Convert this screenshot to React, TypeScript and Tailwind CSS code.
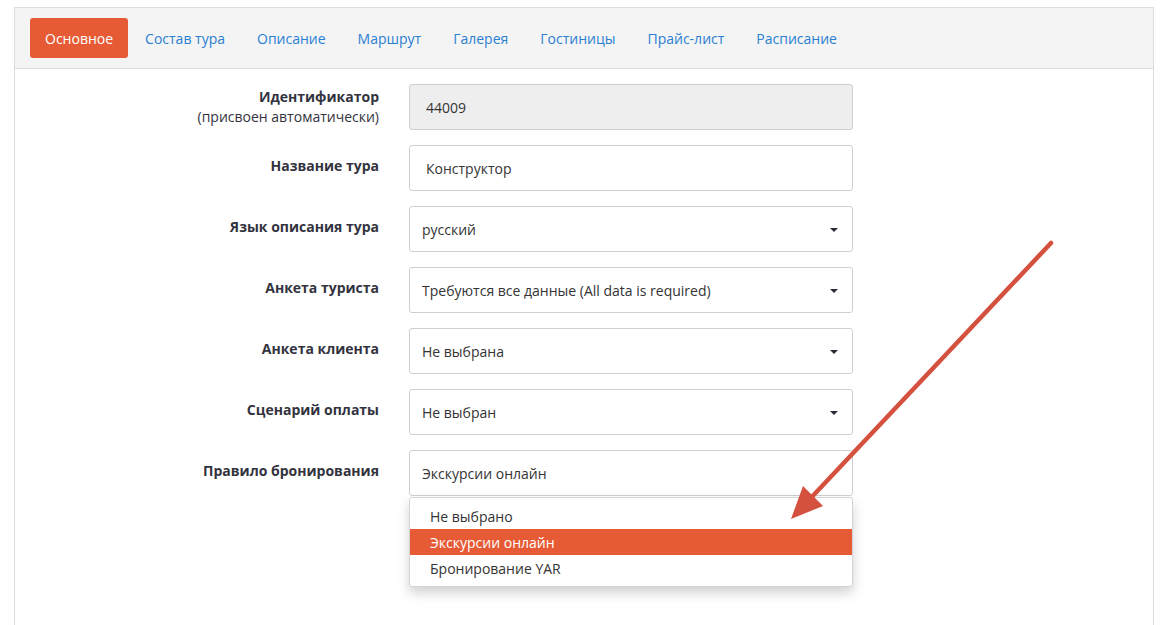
import React from "react";

const tabs = ["Состав тура", "Описание", "Маршрут", "Галерея", "Гостиницы", "Прайс-лист", "Расписание"];

function Caret() {
  return (
    <svg width="8" height="4" viewBox="0 0 8 4" className="absolute right-[14px] top-[21px]">
      <polygon points="0,0 8,0 4,4" fill="#2b2b36" />
    </svg>
  );
}

function Row({ label, sub, children }: { label: string; sub?: string; children: React.ReactNode }) {
  return (
    <div className="flex mb-[15px]">
      <div className={`w-[364px] text-right text-[#333340] ${sub ? "pt-[3px]" : "pt-[11px]"}`}>
        <div className="font-bold text-[14px] leading-[20px]">{label}</div>
        {sub && <div className="text-[14px] leading-[20px]">{sub}</div>}
      </div>
      <div className="ml-[30px] w-[444px] relative">{children}</div>
    </div>
  );
}

function SelectBox({ value, caret = true }: { value: string; caret?: boolean }) {
  return (
    <div className="relative h-[46px] border border-[#cfcfcf] rounded-[3px] bg-white flex items-center pl-[12px] text-[14px] text-[#333]">
      {value}
      {caret && <Caret />}
    </div>
  );
}

export default function App() {
  return (
    <div className="relative w-[1167px] h-[625px] overflow-hidden bg-white" style={{ fontFamily: "'Open Sans', 'Noto Sans', sans-serif" }}>
      <div className="ml-[14px] mr-[13px] mt-[7px] border-x border-t border-[#dddddd] h-[640px]">
        <div className="bg-[#f4f4f4] border-b border-[#dddddd] h-[61px] pt-[10px] pl-[15px] flex items-start">
          <div className="h-[40px] px-[15px] flex items-center rounded-[3px] bg-[#e65b35] text-white text-[14px]">Основное</div>
          {tabs.map((t) => (
            <div key={t} className="h-[40px] ml-[2px] px-[15px] flex items-center text-[14px] text-[#2a7fd2]">
              {t}
            </div>
          ))}
        </div>
        <div className="pt-[15px]">
          <Row label="Идентификатор" sub="(присвоен автоматически)">
            <div className="h-[46px] border border-[#cfcfcf] rounded-[3px] bg-[#eeeeee] flex items-center pl-[16px] text-[14px] text-[#333]">44009</div>
          </Row>
          <Row label="Название тура">
            <div className="h-[46px] border border-[#cfcfcf] rounded-[3px] bg-white flex items-center pl-[16px] text-[14px] text-[#333]">Конструктор</div>
          </Row>
          <Row label="Язык описания тура">
            <SelectBox value="русский" />
          </Row>
          <Row label="Анкета туриста">
            <SelectBox value="Требуются все данные (All data is required)" />
          </Row>
          <Row label="Анкета клиента">
            <SelectBox value="Не выбрана" />
          </Row>
          <Row label="Сценарий оплаты">
            <SelectBox value="Не выбран" />
          </Row>
          <Row label="Правило бронирования">
            <SelectBox value="Экскурсии онлайн" caret={false} />
            <div className="absolute left-0 top-[47px] w-[444px] bg-white border border-[#d4d4d4] rounded-[3px] py-[5px] shadow-[0_6px_12px_rgba(0,0,0,0.18)] text-[14px] text-[#333] z-10">
              <div className="h-[26px] flex items-center pl-[20px]">Не выбрано</div>
              <div className="h-[26px] flex items-center pl-[20px] bg-[#e65b35] text-white">Экскурсии онлайн</div>
              <div className="h-[26px] flex items-center pl-[20px]">Бронирование YAR</div>
            </div>
          </Row>
        </div>
      </div>
      <svg className="absolute left-0 top-0 pointer-events-none z-20" width="1167" height="625" viewBox="0 0 1167 625">
        <line x1="1051" y1="243" x2="808" y2="501" stroke="#d4513f" strokeWidth="4.5" strokeLinecap="round" />
        <polygon points="791,519 803,486 823,506" fill="#d4513f" />
      </svg>
    </div>
  );
}
